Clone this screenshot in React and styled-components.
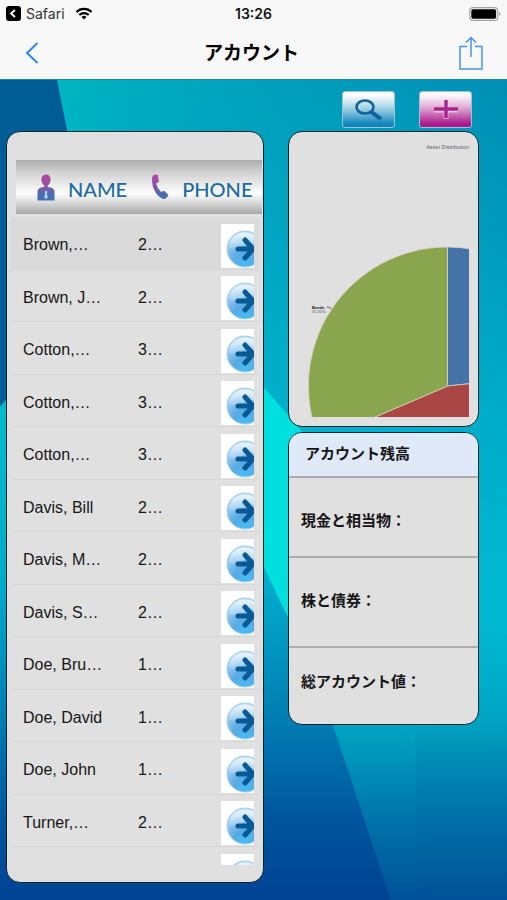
import React from "react";
import styled, { createGlobalStyle } from "styled-components";

const clients = [
  { id: 1, name: "Brown,…", phone: "2…" },
  { id: 2, name: "Brown, J…", phone: "2…" },
  { id: 3, name: "Cotton,…", phone: "3…" },
  { id: 4, name: "Cotton,…", phone: "3…" },
  { id: 5, name: "Cotton,…", phone: "3…" },
  { id: 6, name: "Davis, Bill", phone: "2…" },
  { id: 7, name: "Davis, M…", phone: "2…" },
  { id: 8, name: "Davis, S…", phone: "2…" },
  { id: 9, name: "Doe, Bru…", phone: "1…" },
  { id: 10, name: "Doe, David", phone: "1…" },
  { id: 11, name: "Doe, John", phone: "1…" },
  { id: 12, name: "Turner,…", phone: "2…" },
  { id: 13, name: "", phone: "" },
];

const balances = [
  { label: "現金と相当物：", height: 80, top: 33 },
  { label: "株と債券：", height: 90, top: 33 },
  { label: "総アカウント値：", height: 78, top: 24 },
];

function StatusBar() {
  return (
    <Status>
      <BackToApp href="#safari">
        <svg width="15" height="15" viewBox="0 0 15 15">
          <rect width="15" height="15" rx="3" fill="#000" />
          <path d="M9 4 5 7.5 9 11" fill="none" stroke="#fff" strokeWidth="1.8" />
        </svg>
        Safari
        <svg width="18" height="13" viewBox="0 0 18 13">
          <path d="M1.5 5a10.6 10.6 0 0 1 15 0" fill="none" stroke="#000" strokeWidth="2.4" />
          <path d="M4.3 8a6.6 6.6 0 0 1 9.4 0" fill="none" stroke="#000" strokeWidth="2.2" />
          <path d="M6.5 10a3.5 3.5 0 0 1 5 0L9 12.6z" fill="#000" />
        </svg>
      </BackToApp>
      <time>13:26</time>
      <Battery width="32" height="14" viewBox="0 0 32 14">
        <rect x="0.7" y="0.7" width="28" height="12.6" rx="3.4" fill="none" stroke="#a5a5a5" strokeWidth="1.2" />
        <rect x="2.3" y="2.3" width="24.8" height="9.4" rx="1.8" fill="#000" />
        <path d="M30 5v4q1.5-.6 1.5-2T30 5z" fill="#a5a5a5" />
      </Battery>
    </Status>
  );
}

function PhoneIcon() {
  return (
    <svg width="18" height="27" viewBox="0 0 18 27">
      <path
        d="M2 1.5Q4.500-.3 6.600.8L8 7.500Q6.500 9.200 5 9.600 6.500 14.500 10 18q2-1.200 3.700-.8l3.600 3.600q-.6 3-3.300 4.200Q9 25 4.600 18.400.5 12 1 5.500 1 2.800 2 1.500z"
        fill="url(#violet)"
      />
    </svg>
  );
}

function PersonIcon() {
  return (
    <svg width="18" height="27" viewBox="0 0 18 27">
      <defs>
        <linearGradient id="violet" x1="0" y1="0" x2="0" y2="1">
          <stop offset="0.25" stopColor="#a94aa4" />
          <stop offset="0.8" stopColor="#466eae" />
        </linearGradient>
      </defs>
      <path
        d="M9 .5c3.200 0 4.800 2.500 4.600 5.500-.2 2.700-1.500 4.600-3 5.500l.2 1.500c4 .2 6.700 1.500 6.700 5.500V26.500H.5V18.500c0-4 2.700-5.300 6.700-5.500l.2-1.500c-1.500-.9-2.800-2.800-3-5.500C4.200 3 5.800.5 9 .5z"
        fill="url(#violet)"
      />
      <path d="M9 16.500l1.500 1.500-.7 1 1 4.800L9 25l-1.800-1.200 1-4.800-.7-1z" fill="#a9d5ee" />
    </svg>
  );
}

function ArrowIcon() {
  return (
    <svg width="44" height="44" viewBox="0 0 44 44">
      <defs>
        <radialGradient id="ball" cx="0.5" cy="0.95" r="0.85">
          <stop offset="0" stopColor="#45bdf6" />
          <stop offset="0.4" stopColor="#5aaae3" />
          <stop offset="1" stopColor="#b4daf5" />
        </radialGradient>
        <linearGradient id="shine" x1="0" y1="0" x2="0" y2="1">
          <stop offset="0" stopColor="#fff" stopOpacity="0.7" />
          <stop offset="1" stopColor="#fff" stopOpacity="0.15" />
        </linearGradient>
      </defs>
      <circle cx="24" cy="25" r="18" fill="url(#ball)" stroke="#a4cfec" strokeWidth="1" />
      <path d="M8 23C9 13 16 8.500 24 8.500S39 13 40 21c-7-2-13-2-18 1-5 2.500-9 4.500-14 1z" fill="url(#shine)" />
      <path
        d="M17 25H31M24 16l8 9-8 9"
        fill="none"
        stroke="#075a96"
        strokeWidth="5"
        strokeLinecap="round"
        strokeLinejoin="round"
      />
    </svg>
  );
}

function AssetChart() {
  return (
    <Chart viewBox="0 0 173 279" role="img" aria-label="Asset Distribution">
      <text x="173" y="11" textAnchor="end" fontSize="5.500" fill="#606068">
        Asset Distribution
      </text>
      <g stroke="#d9d3c4" strokeWidth="0.8">
        <path d="M151.500 248V109A139 139 0 0 1 289.700 233.500z" fill="#4572a7" />
        <path d="M151.500 248 289.700 233.500A139 139 0 0 1 23.700 302.800z" fill="#aa4643" />
        <path d="M151.500 248 23.700 302.800A139 139 0 0 1 151.500 109z" fill="#89a54e" />
      </g>
      <path d="M31 169q3-.5 4 2" fill="none" stroke="#333" strokeWidth="0.8" />
      <text x="16" y="171" fontSize="4" fontWeight="bold" fill="#111">
        Bonds
      </text>
      <text x="16" y="175" fontSize="4" fill="#555">
        31.35%
      </text>
    </Chart>
  );
}

function Background() {
  return (
    <Backdrop viewBox="0 0 507 821" preserveAspectRatio="none" aria-hidden="true">
      <defs>
        <linearGradient id="base" x1="0" y1="0" x2="0" y2="1">
          <stop offset="0" stopColor="#009abb" />
          <stop offset="0.4" stopColor="#00b3cf" />
          <stop offset="0.65" stopColor="#00b8d2" />
          <stop offset="0.78" stopColor="#00a8c4" />
          <stop offset="0.9" stopColor="#0074aa" />
          <stop offset="1" stopColor="#005298" />
        </linearGradient>
        <linearGradient id="side" x1="0" y1="0" x2="1" y2="0">
          <stop offset="0.1" stopColor="#00c4c6" stopOpacity="0.7" />
          <stop offset="0.7" stopColor="#009bbb" stopOpacity="0.3" />
          <stop offset="1" stopColor="#007eae" stopOpacity="0.4" />
        </linearGradient>
        <linearGradient id="fade" x1="0" y1="0" x2="0" y2="1">
          <stop offset="0" stopColor="#fff" />
          <stop offset="1" stopColor="#000" />
        </linearGradient>
        <mask id="fadeDown">
          <rect width="507" height="500" fill="url(#fade)" />
        </mask>
        <linearGradient id="deep" gradientUnits="userSpaceOnUse" x1="0" y1="327" x2="0" y2="821">
          <stop offset="0" stopColor="#00bccb" />
          <stop offset="0.36" stopColor="#00acca" />
          <stop offset="0.63" stopColor="#007eb3" />
          <stop offset="0.84" stopColor="#00559d" />
          <stop offset="1" stopColor="#004294" />
        </linearGradient>
        <linearGradient id="seam" x1="0" y1="0" x2="0" y2="1">
          <stop offset="0" stopColor="#004c90" stopOpacity="0" />
          <stop offset="0.4" stopColor="#004c90" stopOpacity="0.1" />
          <stop offset="1" stopColor="#004c90" stopOpacity="0.1" />
        </linearGradient>
      </defs>
      <rect width="507" height="821" fill="url(#base)" />
      <rect width="507" height="500" fill="url(#side)" mask="url(#fadeDown)" />
      <path d="M0 0H57L100 215 0 327z" fill="#005c95" />
      <path d="M264 308 320 373V620L264 488 100 400V215z" fill="#00e0df" />
      <path d="M0 327 100 400 264 488 288 538 333 646 391 821H0z" fill="url(#deep)" />
      <path d="M414 600H507V821H418z" fill="url(#seam)" />
    </Backdrop>
  );
}

function App() {
  return (
    <>
      <GlobalStyle />
      <Screen>
        <StatusBar />
        <NavBar>
          <NavButton aria-label="戻る">
            <svg width="14" height="22" viewBox="0 0 14 22">
              <path d="M12.500 1 2 11l10.500 10" fill="none" stroke="#1f83f5" strokeWidth="1.800" />
            </svg>
          </NavButton>
          <h1>アカウント</h1>
          <NavButton aria-label="共有">
            <svg width="26" height="34" viewBox="0 0 26 34">
              <path
                d="M9 10.500H2V33H24V10.500H17M13 21V1.500M8 6.500l5-5 5 5"
                fill="none"
                stroke="#4593f0"
                strokeWidth="1.500"
              />
            </svg>
          </NavButton>
        </NavBar>

        <Content>
          <Background />
          <Toolbar>
            <ToolButton $from="#fbfdfe" $mid="#a6d4e6" $to="#0f86bd" aria-label="検索">
              <svg width="30" height="24" viewBox="0 0 30 24">
                <g fill="none" stroke="#12639b" strokeWidth="2.600">
                  <ellipse cx="11" cy="9" rx="8.500" ry="6.500" />
                  <path d="M16.500 13.500 27 21" strokeWidth="4" />
                </g>
              </svg>
            </ToolButton>
            <ToolButton $from="#fcf7fb" $mid="#dfa9d2" $to="#a9178c" aria-label="追加">
              <svg width="28" height="24" viewBox="0 0 28 24">
                <path d="M2 12H26M14 3V21" stroke="#fff" strokeOpacity="0.5" strokeWidth="5" />
                <path d="M2 11H26M14 2V20" stroke="#a62590" strokeWidth="3.500" />
              </svg>
            </ToolButton>
          </Toolbar>

          <Panels>
            <ClientCard>
              <ClientTable>
                <thead>
                  <HeadRow>
                    <HeadCell>
                      <PersonIcon />
                      NAME
                    </HeadCell>
                    <HeadCell>
                      <PhoneIcon />
                      PHONE
                    </HeadCell>
                  </HeadRow>
                </thead>
                <ClientList>
                  {clients.map((client, i) => (
                    <ClientRow key={client.id} $active={i === 0}>
                      <td>{client.name}</td>
                      <td>{client.phone}</td>
                      <td>
                        <OpenButton aria-label="詳細">
                          <ArrowIcon />
                        </OpenButton>
                      </td>
                    </ClientRow>
                  ))}
                </ClientList>
              </ClientTable>
            </ClientCard>

            <Side>
              <ChartCard>
                <AssetChart />
              </ChartCard>
              <Card>
                <BalanceTitle>アカウント残高</BalanceTitle>
                {balances.map((item) => (
                  <BalanceRow key={item.label} $height={item.height} $top={item.top}>
                    {item.label}
                  </BalanceRow>
                ))}
              </Card>
            </Side>
          </Panels>
        </Content>
      </Screen>
    </>
  );
}

const GlobalStyle = createGlobalStyle`
  * {
    box-sizing: border-box;
  }
  body {
    margin: 0;
    color: #161616;
    font-family: "Liberation Sans", "Noto Sans CJK JP", sans-serif;
  }
  button {
    padding: 0;
    border: none;
    background: none;
    cursor: pointer;
  }
  svg {
    display: block;
  }
`;

const Screen = styled.div`
  display: flex;
  flex-direction: column;
  min-height: 100vh;
`;

const Status = styled.header`
  display: grid;
  grid-template-columns: 1fr auto 1fr;
  align-items: center;
  height: 27px;
  padding: 0 6px;
  background: #f8f8f8;
  font-family: Inter, sans-serif;

  time {
    font-size: 14px;
    font-weight: 600;
    color: #111;
  }
`;

const BackToApp = styled.a`
  display: flex;
  align-items: center;
  gap: 5px;
  color: #333;
  font-size: 14px;
  text-decoration: none;

  svg:last-child {
    margin-left: 5px;
  }
`;

const Battery = styled.svg`
  justify-self: end;
`;

const NavBar = styled.nav`
  display: grid;
  grid-template-columns: 1fr auto 1fr;
  align-items: center;
  height: 52px;
  padding: 0 22px 0 18px;
  background: #f8f8f8;

  h1 {
    margin: 0;
    padding-bottom: 4px;
    font-size: 19px;
    font-weight: bold;
    color: #000;
  }

  button:last-child {
    justify-self: end;
  }
`;

const NavButton = styled.button`
  display: flex;
  justify-content: center;
  width: 28px;
`;

const Content = styled.main`
  position: relative;
  isolation: isolate;
  flex: 1;
  padding: 11px 28px 17px 6px;
  border-top: 1px solid #1c86a3;
`;

const Backdrop = styled.svg`
  position: absolute;
  inset: 0;
  z-index: -1;
  width: 100%;
  height: 100%;
`;

const Toolbar = styled.div`
  display: flex;
  justify-content: flex-end;
  gap: 24px;
  padding-right: 7px;
  margin-bottom: 3px;
`;

const ToolButton = styled.button`
  display: flex;
  align-items: center;
  justify-content: center;
  width: 53px;
  height: 37px;
  border: 1px solid #9fc3cf;
  border-radius: 3px;
  background: linear-gradient(
    ${(p) => p.$from} 10%,
    ${(p) => p.$mid} 45%,
    ${(p) => p.$to} 92%
  );
`;

const Panels = styled.div`
  display: grid;
  grid-template-columns: 258fr 191fr;
  gap: 24px;
  align-items: start;
`;

const Card = styled.section`
  border: 1px solid #10252b;
  border-radius: 14px;
  background: #e0e0e0;
  overflow: hidden;
`;

const ClientCard = styled(Card)`
  padding: 28px 1px 17px;
`;

const ClientTable = styled.table`
  display: block;
  font-size: 16px;

  thead {
    display: block;
    padding: 0 0 3px 8px;
  }
`;

const HeadRow = styled.tr`
  display: flex;
  align-items: center;
  gap: 24px;
  height: 54px;
  padding-left: 21px;
  background: linear-gradient(#adadad, #d4d4d4 25%, #fdfdfd 62%, #e2e2e2 75%, #a9a9a9);
`;

const HeadCell = styled.th`
  display: flex;
  align-items: flex-end;
  gap: 13px;
  padding: 0;
  color: #1b6ba3;
  font-family: Lato, sans-serif;
  font-size: 20px;
  font-weight: 500;
  line-height: 24px;
`;

const ClientList = styled.tbody`
  display: block;
  height: calc(100vh - 252px);
  min-height: 300px;
  padding: 0 3px;
  overflow-y: auto;
  scrollbar-width: none;
`;

const ClientRow = styled.tr`
  display: grid;
  grid-template-columns: 115px 1fr 33px;
  align-items: center;
  height: 53px;
  padding: 4px 5px 0 12px;
  border-bottom: 1px solid #d8d8d8;
  background: ${(p) => (p.$active ? "#dadada" : "transparent")};

  &:nth-child(even) {
    height: 52px;
  }

  td {
    padding: 0;
    white-space: nowrap;
  }
`;

const OpenButton = styled.button`
  display: block;
  width: 100%;
  margin-top: 1px;
  background: #fff;
  overflow: hidden;
`;

const Side = styled.div`
  display: flex;
  flex-direction: column;
  gap: 5px;
`;

const ChartCard = styled(Card)`
  padding: 6px 9px 9px 7px;
`;

const Chart = styled.svg`
  width: 100%;
  height: auto;
`;

const BalanceTitle = styled.h2`
  height: 43px;
  margin: 0;
  padding: 11px 16px 0;
  background: #dfe9f7;
  font-size: 15px;
  line-height: 20px;
`;

const BalanceRow = styled.div`
  height: ${(p) => p.$height}px;
  padding: ${(p) => p.$top}px 12px 0;
  border-top: 2px solid #acacac;
  font-size: 15px;
  font-weight: bold;
  line-height: 20px;
`;

export default App;
